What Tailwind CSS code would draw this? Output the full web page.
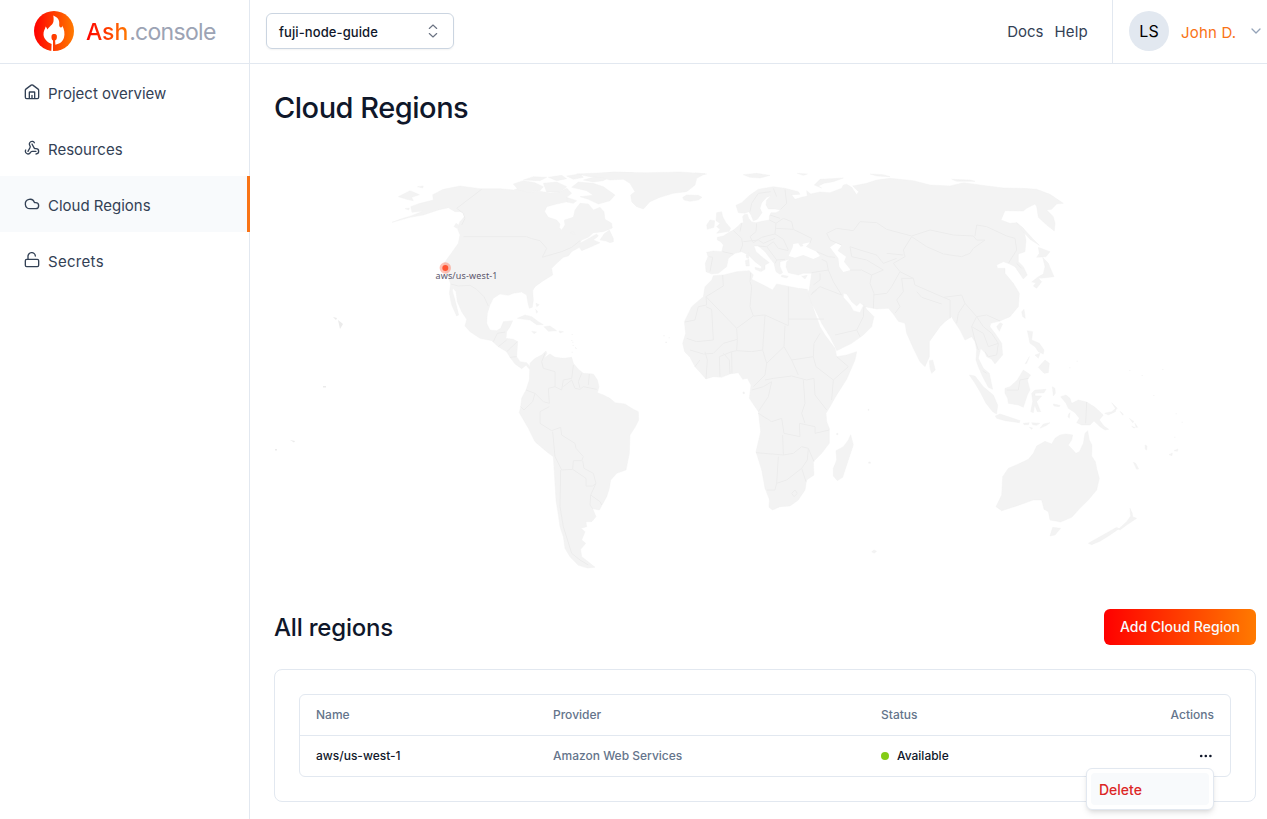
<!DOCTYPE html>
<html lang="en">
<head>
<meta charset="utf-8">
<title>Ash Console - Cloud Regions</title>
<script src="https://cdn.jsdelivr.net/npm/@tailwindcss/browser@4"></script>
</head>
<body class="bg-white font-['Inter',sans-serif] text-[#0f172a]">
<div class="flex h-[819px] w-[1267px] overflow-hidden">
  <aside class="flex w-[250px] shrink-0 flex-col border-r border-[#e2e8f0]">
    <div class="flex h-16 items-center border-b border-[#e2e8f0] pl-[34px]">
      <svg class="-mt-0.5 size-10 shrink-0" viewBox="0 0 40 40">
        <defs><linearGradient id="ash" x1="0" x2="1"><stop stop-color="#ff0000"/><stop offset="1" stop-color="#ff7a00"/></linearGradient></defs>
        <circle cx="20" cy="20" r="20" fill="url(#ash)"/>
        <path fill="#fff" d="M19.2 4.6C23.4 6.2 25.8 9 25.2 13.2C25 14.9 25.6 16.4 27 16.6C28 16.5 28.4 15.7 28.2 14.6C30.4 18.5 31 23 30 26.6C28.8 31 25.5 33 21.4 33.7L21.1 29.6C23 28.6 23.2 26 22.7 24.2C22.2 22.6 18.2 22.6 17.7 24.2C17.2 26 17.4 28.6 19 29.6L19 40L17.3 40L17.6 33C13.4 31.3 9.8 28 9.5 23.8C9.3 20.2 11 18.3 11.7 15.6C12.6 16.4 13 17.5 13.3 18.5C15.3 15.4 18.9 13.8 19.5 10.2C19.8 8.2 19.6 6.3 19.2 4.6Z"/>
      </svg>
      <div class="ml-3 text-[23px] leading-8"><span class="bg-linear-to-r/srgb from-[#ff0000] to-[#ff7a00] bg-clip-text font-medium tracking-[-0.1px] text-transparent">Ash</span><span class="ml-px tracking-[-0.7px] text-[#9ca3b4]">.console</span></div>
    </div>
    <nav class="flex flex-col text-[15px] text-[#334155]">
      <a class="flex h-14 items-center gap-2 pt-1 pl-6"><svg class="-mt-1 size-4" viewBox="0 0 24 24" fill="none" stroke="currentColor" stroke-width="2" stroke-linecap="round" stroke-linejoin="round"><path d="M22 20V9.300a2 2 0 0 0-.8-1.600l-8-6a2 2 0 0 0-2.400 0l-8 6A2 2 0 0 0 2 9.300V20a2 2 0 0 0 2 2h16a2 2 0 0 0 2-2ZM8 22V12.500a.5.500 0 0 1 .5-.5h7a.5.500 0 0 1 .5.500V22M12 22v-5"/></svg>Project overview</a>
      <a class="flex h-14 items-center gap-2 pt-1 pl-6"><svg class="-mt-1 size-4" viewBox="0 0 24 24" fill="none" stroke="currentColor" stroke-width="2" stroke-linecap="round" stroke-linejoin="round"><path d="M18 16.980h-5.990c-1.100 0-1.950.94-2.480 1.900A4 4 0 0 1 2 17c.01-.7.200-1.400.57-2"/><path d="m6 17 3.130-5.780c.53-.97.100-2.180-.5-3.100a4 4 0 1 1 6.890-4.060"/><path d="m12 6 3.130 5.730C15.660 12.700 16.900 13 18 13a4 4 0 0 1 0 8"/></svg>Resources</a>
      <a class="-mr-px flex h-14 items-center gap-2 border-r-3 border-[#f97316] bg-[#f8fafc] pt-1 pl-6"><svg class="-mt-1 size-4" viewBox="0 0 24 24" fill="none" stroke="currentColor" stroke-width="2" stroke-linecap="round" stroke-linejoin="round"><path d="M17.500 19H9a7 7 0 1 1 6.710-9h1.790a4.500 4.500 0 1 1 0 9Z"/></svg>Cloud Regions</a>
      <a class="flex h-14 items-center gap-2 pt-1 pl-6"><svg class="-mt-1 size-4" viewBox="0 0 24 24" fill="none" stroke="currentColor" stroke-width="2" stroke-linecap="round" stroke-linejoin="round"><rect x="2" y="11" width="20" height="11" rx="2"/><path d="M6 11V7a5.500 5.500 0 0 1 11-1"/></svg><span class="tracking-[0.3px]">Secrets</span></a>
    </nav>
  </aside>
  <div class="flex min-w-0 flex-1 flex-col">
    <header class="flex h-16 shrink-0 items-center border-b border-[#e2e8f0] pl-4">
      <button class="-mt-0.5 flex h-9 w-[188px] items-center justify-between rounded-md border border-[#cbd5e1] pr-3 pl-3 text-[13px] font-medium tracking-[0.1px] shadow-xs"><span class="pt-1">fuji-node-guide</span>
        <svg class="size-4 text-gray-500" viewBox="0 0 16 16" fill="none" stroke="currentColor" stroke-width="1.100" stroke-linecap="round" stroke-linejoin="round"><path d="m4.300 5.500 3.700-3.500 3.700 3.500M4.300 10.500l3.700 3.500 3.700-3.500"/></svg></button>
      <nav class="ml-auto flex gap-[11px] pt-0.5 pr-6 text-[15px] text-[#334155]"><a>Docs</a><a class="tracking-[0.2px]">Help</a></nav>
      <div class="flex h-full w-[155px] items-center border-l border-[#e2e8f0] pl-4">
        <span class="-mt-0.5 flex size-10 items-center justify-center rounded-full bg-[#e2e8f0] text-base text-black">LS</span>
        <span class="ml-3 pt-[3px] text-[15px] tracking-[0.2px] text-[#f97316]">John D.</span>
        <svg class="-mt-0.5 ml-3 size-4 text-[#94a3b8]" viewBox="0 0 16 16" fill="none" stroke="currentColor" stroke-width="1.300" stroke-linecap="round" stroke-linejoin="round"><path d="m4 6 4 4 4-4"/></svg>
      </div>
    </header>
    <main class="flex flex-col pt-6 pr-[11px] pl-6">
      <h1 class="text-[29px] leading-10 font-medium tracking-[-0.48px]">Cloud Regions</h1>
      <svg class="mt-6 h-[436px] w-[982px]" viewBox="274 152 982 436">
        <g fill="#f3f3f3" stroke="#efefef" stroke-width="1.200" stroke-linejoin="round">
          <!-- North America -->
          <g transform="translate(380 160) scale(.33333)">
            <path d="M36 187L60 178L95 167L130 153L96 157L92 140L120 130L160 120L158 104L190 88L240 78L300 86L360 86L400 90L420 84L440 96L480 94L510 99L540 96L560 84L575 100L560 112L568 124L530 132L500 140L494 155L505 172L530 180L540 192L538 203L545 210L555 195L553 180L580 172L585 150L600 130L625 132L640 150L660 142L672 155L675 178L695 190L697 204L670 215L640 218L625 232L605 240L600 250L625 236L650 222L655 228L640 240L660 248L630 262L605 272L598 262L575 275L565 288L550 292L530 310L515 325L518 345L490 362L465 380L458 392L460 420L457 442L448 445L443 425L440 405L425 396L400 400L385 406L360 402L340 415L330 435L322 460L320 490L330 510L350 512L362 505L370 485L398 482L390 500L380 515L378 535L400 538L413 545L410 590L420 605L440 608L450 620L449 628L438 616L425 626L405 612L390 592L380 575L355 560L335 542L300 535L270 515L255 498L260 478L245 455L232 425L228 395L219 385L217 392L225 420L232 448L236 465L230 468L215 435L208 400L212 372L208 360L195 335L192 310L210 285L235 250L240 225L232 205L240 185L255 168L248 155L225 155L205 143L175 150L130 165L90 172Z"/>
            <path d="M55 110L90 92L105 98L118 104L95 112L100 122L80 118ZM112 80L130 78L128 84ZM75 146L88 144L86 150ZM222 200L228 190L240 198L230 204ZM660 240L672 222L688 210L700 235L700 245L690 248L678 243ZM585 225L570 218L580 214ZM400 72L430 62L465 68L490 80L480 92L440 96L415 90ZM430 60L460 50L500 52L480 62ZM490 70L530 66L560 80L540 96L500 96ZM505 52L545 46L560 56L530 62ZM560 48L600 42L610 52L580 58ZM575 82L595 66L640 70L670 80L705 105L690 122L655 132L625 118L600 110L640 106L620 92ZM610 60L640 52L690 50L670 62L640 66ZM560 112L590 122L580 130L560 126ZM640 44L700 36L760 38L720 48L680 50Z"/>
            <path d="M590 42L700 37L800 38L900 36L975 41L950 55L945 75L920 95L880 100L840 112L810 125L790 147L770 140L755 125L752 105L765 95L750 70L730 58L690 60L660 52L630 50Z"/>
            <path d="M908 112L920 105L955 106L966 112L955 120L930 124L912 120Z"/>
            <path d="M412 475L435 465L455 470L475 485L490 494L470 494L450 480ZM492 500L510 498L530 512L505 514ZM455 514L470 516L462 521ZM537 513L550 515L540 519ZM468 430L478 434L470 440ZM467 448L473 455L470 460Z"/>
            <path stroke="none" d="M575 522h3v3h-3ZM577 545h3v3h-3ZM585 562h3v3h-3ZM575 575h3v3h-3ZM850 526h4v3h-4ZM856 545h5v4h-5ZM866 532h3v3h-3Z"/>
            <g fill="none" stroke="#ececec" stroke-width="3"><path d="M305 88L230 145L250 160M250 230H440L455 236L480 242L500 265L487 292L510 285L545 275L575 262L600 242M212 372L235 378L270 376L290 388L312 410L325 438M340 545L352 520L376 516M355 560L380 540M380 575L412 545M390 592L410 590M250 160L255 175L245 195"/></g>
          </g>
          <!-- South America -->
          <g transform="translate(500 340) scale(.33333)">
            <path d="M90 70L105 55L125 45L138 33L140 40L133 55L145 45L150 42L165 52L190 55L215 52L220 70L235 88L250 100L280 102L292 120L297 140L292 158L310 165L330 175L345 188L375 192L400 208L415 215L416 240L405 262L390 285L388 340L378 390L350 400L332 420L328 445L320 470L298 510L278 506L288 530L275 545L258 545L260 560L243 565L255 575L245 600L257 610L242 628L245 650L258 660L285 682L262 684L235 676L210 650L195 625L190 590L180 560L175 525L168 480L160 350L140 335L105 305L85 265L58 218L62 200L65 175L78 150L88 120Z"/>
            <path stroke="none" d="M214 0h3v3h-3ZM218 15h3v3h-3ZM227 24h3v3h-3Z"/>
            <g fill="none" stroke="#ececec" stroke-width="3"><path d="M135 40L125 65L130 85L165 95L165 140L185 150L190 120L215 115L220 75M190 140L215 120L225 145L240 148L250 140L290 148M245 100L235 125L240 145M268 102L265 135M165 140L145 145L148 190L130 185L105 160L78 150M105 160L98 185L72 210L62 200M148 200L120 215L120 250L155 272L182 262L185 285L225 310L228 325L250 350L245 362L220 362L218 388L185 390L165 350L158 275M182 390L180 500L190 560L215 640L240 660L265 675M218 388L258 415L258 438L278 438L288 430L280 400L252 385L248 362M288 430L272 465L270 495L278 506M272 465L300 485L305 495"/></g>
          </g>
          <g transform="translate(670 160) scale(.33333)">
            <!-- Eurasia -->
            <path d="M108 335L106 310L114 290L110 277L130 273L155 275L160 255L152 245L142 240L142 232L160 228L175 218L190 210L205 198L212 190L220 188L218 170L222 164L232 163L236 175L245 186L258 188L280 183L298 180L298 168L303 158L318 158L332 150L315 147L295 147L288 135L290 120L303 108L290 112L275 128L270 145L276 158L262 178L250 182L243 165L236 155L225 160L205 158L198 136L215 128L240 105L265 88L310 80L345 85L385 95L390 103L365 104L375 118L395 112L412 108L410 92L422 102L450 96L480 98L515 85L520 75L530 73L545 82L560 104L566 95L548 78L590 70L620 60L660 55L730 62L780 75L840 78L880 68L930 75L1000 84L1060 85L1100 88L1140 103L1180 130L1160 132L1145 148L1130 150L1150 170L1155 190L1153 213L1130 195L1105 172L1100 140L1095 132L1070 145L1060 153L1005 152L993 180L1020 190L1040 188L1060 205L1068 240L1065 275L1045 282L1045 305L1060 320L1072 345L1060 357L1045 335L1035 320L1015 310L1000 305L980 315L982 325L1005 325L1005 340L1030 370L1048 400L1045 440L1020 470L990 483L962 490L960 500L975 520L995 550L998 585L975 612L965 598L950 590L945 578L932 565L925 595L940 625L958 640L968 688L955 682L938 650L925 620L918 600L920 570L915 545L905 530L885 540L870 510L850 480L845 470L825 485L810 500L778 545L778 590L765 620L750 605L730 565L710 520L705 490L685 484L670 462L655 445L620 447L585 440L570 428L560 438L545 425L530 402L520 400L520 412L540 434L550 452L570 458L582 432L590 448L612 470L605 500L580 525L545 550L500 572L495 560L480 530L455 490L435 448L415 420L412 400L418 388L422 360L425 340L400 340L385 345L355 338L348 320L350 305L360 298L350 300L330 305L330 320L338 338L330 343L318 335L312 310L300 295L285 275L265 258L252 258L258 275L275 290L298 308L285 315L285 328L272 335L275 320L255 305L235 285L215 275L195 280L175 295L170 320L145 340L125 342Z"/>
            <path fill="#fff" stroke="none" d="M356 288L368 262L370 252L385 250L392 260L400 258L397 252L420 247L408 260L440 275L450 288L430 297L400 285L375 293ZM480 262L500 248L515 255L503 272L528 290L522 305L542 330L520 336L508 320L505 295Z"/>
            <path d="M140 158L155 155L158 170L168 188L182 205L178 214L140 220L150 208L140 200L150 190L138 182ZM110 195L120 180L134 182L132 202L112 208ZM433 75L450 58L520 54L490 65L462 70L445 78L455 84ZM220 44L260 40L300 46L270 54L240 52ZM382 40L412 42L400 46ZM228 285L236 278L236 295L230 294ZM226 302L237 298L238 318L228 318ZM255 322L274 326L270 334L256 328ZM335 345L355 349L350 354L334 350ZM395 349L412 346L405 357ZM75 39L110 42L90 46Z"/>
            <path d="M600 42L640 44L660 50L620 48ZM845 58L900 60L915 64L860 64ZM1040 188L1060 205L1090 238L1108 256L1080 238L1055 210ZM1105 262L1140 275L1128 290L1100 292L1108 280ZM1118 292L1135 310L1152 350L1120 354L1105 355L1115 365L1100 385L1090 378L1098 368L1085 366L1105 350L1120 342L1125 320ZM1055 455L1062 448L1066 475L1058 470ZM980 500L990 488L998 492L988 514ZM778 602L788 600L796 630L785 640L780 625ZM1072 512L1088 515L1085 540L1108 550L1122 570L1120 582L1105 575L1095 560L1080 550ZM1095 585L1110 580L1105 595ZM1065 612L1078 590L1070 610ZM1105 622L1125 600L1138 610L1135 638L1122 640Z"/>
            <!-- Africa -->
            <path d="M130 347L160 345L200 335L238 332L250 345L245 358L280 375L308 390L320 372L350 378L385 385L412 388L415 405L430 445L450 500L465 525L495 565L500 590L530 585L560 575L555 600L530 658L500 705L480 740L468 760L470 785L478 805L478 850L455 880L430 905L432 945L410 960L405 990L385 1020L360 1038L330 1040L308 1050L297 1042L298 1018L285 985L275 930L258 875L272 815L265 755L238 715L243 675L232 655L218 658L205 638L180 642L155 652L130 650L108 657L75 620L60 592L44 575L38 550L47 520L43 485L65 440L100 410L105 380L125 360ZM542 824L550 855L535 900L518 952L502 962L490 948L490 925L500 900L498 872L520 860L535 840ZM605 1175L612 1170L620 1174L612 1180ZM596 906h5v4h-5ZM500 820h4v4h-4ZM219 696h4v5h-4ZM594 748h3v3h-3Z"/>
            <g fill="none" stroke="#ececec" stroke-width="3">
              <path d="M108 410L160 378L158 345M108 410L110 435L85 440L75 480L45 486M108 410L200 505L250 468L285 465L355 497L355 380M355 477H462M242 338L240 365L245 380L240 440L250 468M125 448L130 540L80 545L50 535M125 448L108 440M200 505L202 538L160 550L130 580L100 582L60 570M202 538L200 572L185 575L186 640M285 465L278 570L245 575L200 572M345 497L342 560L290 610L278 570M342 560L365 600L430 590L432 550L450 520M290 610L285 645L250 680M285 660L310 655L365 648L410 660L432 655M365 600L385 645M430 590L438 620L490 660L535 620L500 590M432 655L435 705L470 750M490 660L485 720M245 690L280 680L305 665L295 710L265 755M265 760L305 785L335 775L342 820L390 830L388 790L435 800L435 820L478 810M400 660L405 730L395 760L405 790M258 878L340 885L370 880L395 860L415 865L412 900L395 925L350 960L320 970L325 890M340 885L338 825M415 865L432 905M320 970L315 990L290 990M395 925L408 965M365 1000L375 990L382 1000L372 1010ZM108 657L112 600L105 575M150 650L148 590L185 575M160 580L178 600L180 642M75 620L90 600"/>
              <path d="M118 290L128 292L120 335M158 275L190 282M190 212L215 235L218 255L210 275M215 190L210 215M260 190L258 215L240 230L250 248L275 232L315 222L318 190L298 180M315 222L340 238L355 270M318 205L370 208L425 235L420 250M318 190L340 175L365 185L370 208M300 165L330 175M345 88L350 130L332 148M310 85L320 110M302 95L265 100L245 130L240 155M220 245L265 240L280 250L315 235M265 258L290 260L320 300L345 298M290 260L310 245L325 265L355 272M320 300L315 310M440 275L475 290L495 292M455 298L470 305L475 330L425 338M475 330L490 365L515 405M430 375L450 360L450 340M425 400L450 380L515 405M422 405L440 390M540 330L575 330L605 345L600 370L612 400L610 445M540 260L570 270L620 285L640 310L680 295M540 260L545 290L590 300L640 330L605 345M515 255L480 240L470 220L500 205L550 212L570 185L620 188L650 208L725 228L780 210L850 225L910 228L920 240L945 240L910 265L900 280L875 290L820 282L770 260L725 230L700 270L705 290L670 310L690 335L730 355L735 375L820 412L875 405L885 430L920 470L950 465L990 483M915 228L920 195L950 200L1010 228L1035 235L1040 270L1015 310M700 285L650 280M690 335L665 380L650 400L610 405M730 355L695 355L700 395L680 420L690 440L675 460M740 395L755 412L815 432M820 412L840 420L840 475M885 430L865 460L860 490M920 470L905 500L915 540L925 570M920 470L940 500L965 520L985 550M905 500L940 520L955 560L985 550L980 585L955 590L945 575M495 525L560 510L580 470L582 440M560 510L570 530M1040 310L1055 325"/>
            </g>
          </g>
          <!-- South-East Asia and Oceania -->
          <g transform="translate(940 340) scale(.33333)">
            <path d="M88 105L105 108L130 140L160 165L173 195L170 222L158 215L138 190L120 155L105 130ZM166 228L180 222L210 232L240 242L238 248L195 242L170 235ZM195 145L210 140L232 120L250 90L272 105L262 120L270 150L262 165L250 202L235 195L205 190L203 175L195 160ZM275 160L285 150L318 148L312 158L285 160L285 168L305 168L290 185L302 215L292 215L284 195L280 218L272 215L278 185ZM250 250L268 248L265 254L252 254ZM275 248L300 250L290 256L278 254ZM300 265L310 252L330 248L320 256ZM268 262L278 264L275 268ZM337 140L345 145L346 160L340 168ZM340 192L360 196L358 200L342 198ZM362 170L378 165L390 175L395 190L415 180L440 186L465 202L490 225L478 240L492 258L506 268L495 270L480 260L462 243L450 255L425 255L410 248L418 235L405 218L385 205L378 190ZM386 222L390 218L388 235L384 230ZM494 220L515 215L528 205L526 215L505 225ZM515 188L532 205L528 208ZM540 214L550 222L548 226ZM568 235L582 245L578 248ZM585 250L593 262L588 262ZM575 258L586 263L580 264ZM615 315L621 318L620 330L616 328ZM580 367L587 370L596 387L590 388ZM687 344L697 339L696 347ZM702 332L714 327L712 334Z"/>
            <path d="M265 358L280 340L290 318L315 304L335 312L345 295L360 285L378 282L398 285L395 300L385 315L408 340L418 335L430 310L435 280L443 272L448 300L456 315L455 348L466 365L470 385L478 415L470 450L445 480L420 505L395 532L362 546L330 540L325 515L312 508L305 480L280 480L230 498L185 512L168 500L185 465L188 410L205 385L235 372ZM338 562L362 565L345 585L330 588Z"/>
            <path d="M570 505L577 520L578 530L590 535L560 555L540 570L535 568L560 545L572 528ZM445 610L480 590L530 562L537 566L510 585L480 604L455 614Z"/>
            <path stroke="none" d="M568 90h3v3h-3ZM605 105h3v3h-3ZM667 87h3v3h-3ZM640 165h3v3h-3ZM707 220h3v3h-3ZM725 245h3v3h-3ZM410 62h3v3h-3ZM703 290h3v3h-3ZM388 82h3v3h-3Z"/>
            <path fill="none" stroke="#ececec" stroke-width="3" d="M440 186L437 250M200 150L235 150L240 120L265 115M128 92L140 100"/>
          </g>
          <path stroke="none" fill="#ebebeb" d="M333 317l4 1-1 2zM338 320l5 4-3 5zM323 386h3v1.500h-3zM290 440l5 1-1 1.500zM275 449h2v1.500h-2z"/>
        </g>
        <circle cx="445.300" cy="268" r="5.700" fill="#ff5533" fill-opacity=".35"/>
        <circle cx="445.300" cy="268" r="3" fill="#ff5533"/>
        <text x="435.500" y="279" textLength="62" class="fill-[#5a566b] font-['Noto_Sans'] text-[9px]">aws/us-west-1</text>
      </svg>
      <div class="mt-[21px] flex h-9 items-center justify-between">
        <h2 class="pt-0.5 text-2xl font-medium tracking-[-0.2px]">All regions</h2>
        <button class="flex h-9 w-[152px] items-center justify-center rounded-md bg-linear-to-r/srgb from-[#ff0000] to-[#ff7a00] text-sm font-medium text-[#f8fafc]">Add Cloud Region</button>
      </div>
      <section class="mt-6 h-[133px] rounded-lg border border-[#e2e8f0] p-6">
        <div class="rounded-md border border-[#e2e8f0] text-xs font-medium">
          <div class="flex h-10 items-center px-4 text-[#64748b]"><span class="w-[237px]">Name</span><span class="w-[328px]">Provider</span><span>Status</span><span class="ml-auto">Actions</span></div>
          <div class="flex h-[41px] items-center border-t border-[#e2e8f0] px-4"><span class="w-[237px]">aws/us-west-1</span><span class="w-[328px] text-[#64748b]">Amazon Web Services</span><span class="flex items-center gap-2"><i class="size-2 rounded-full bg-[#84cc16]"></i>Available</span>
            <div class="relative ml-auto">
              <svg class="size-4" viewBox="0 0 16 16" fill="currentColor"><circle cx="3.200" cy="8" r="1.300"/><circle cx="7.800" cy="8" r="1.300"/><circle cx="12.400" cy="8" r="1.300"/></svg>
              <div class="absolute top-5 right-0 w-32 rounded-md border border-[#e2e8f0] bg-white p-1 shadow-md"><div class="rounded-sm bg-[#f8fafc] px-2 pt-[7px] pb-[5px] text-sm leading-5 font-medium text-[#dc2626]">Delete</div></div>
            </div>
          </div>
        </div>
      </section>
    </main>
  </div>
</div>
</body>
</html>
